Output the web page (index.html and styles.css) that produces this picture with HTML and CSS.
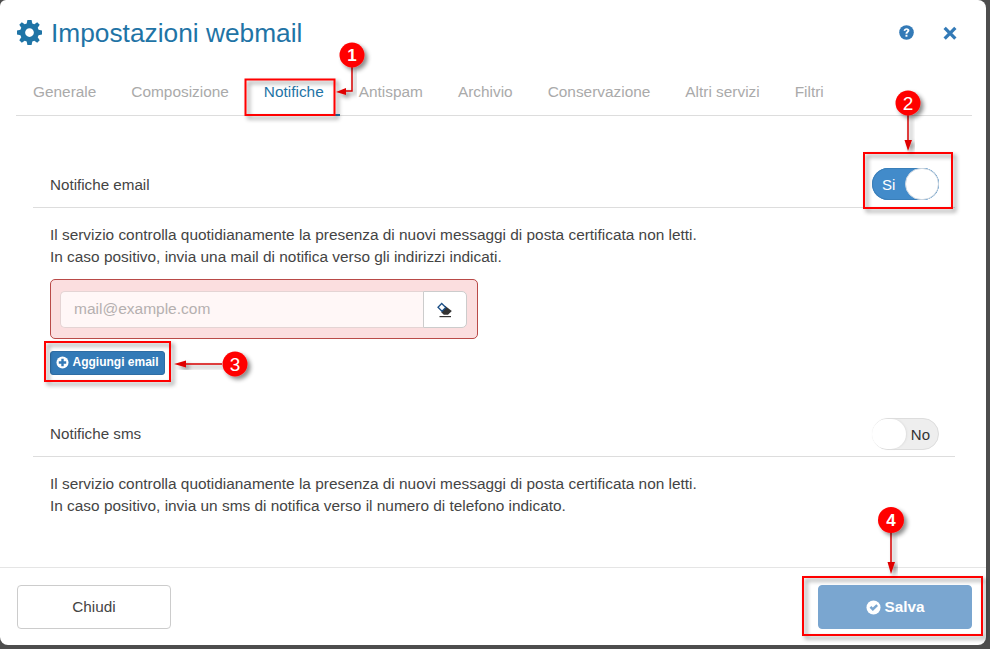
FILE: index.html
```html
<!DOCTYPE html>
<html lang="it">
<head>
<meta charset="utf-8">
<title>Impostazioni webmail</title>
<link rel="stylesheet" href="styles.css">
</head>
<body>
<div class="modal">
  <header class="head">
    <h1 class="title">
      <svg class="gear" viewBox="0 0 24 24"><path fill-rule="evenodd" d="M10 0h4l.7 3.3 1.900.8L19.400 2.200l2.400 2.400-1.900 2.800.8 1.900L24 10v4l-3.300.7-.8 1.900 1.900 2.800-2.400 2.400-2.800-1.900-1.900.8L14 24h-4l-.7-3.300-1.900-.8-2.800 1.900-2.400-2.400 1.900-2.800-.8-1.900L0 14v-4l3.300-.7.8-1.900-1.900-2.800 2.400-2.400 2.800 1.900 1.900-.8zM12 7.800a4.200 4.200 0 1 0 0 8.400 4.200 4.200 0 0 0 0-8.400z"/></svg>
      <span>Impostazioni webmail</span>
    </h1>
    <div class="head-icons">
      <svg class="ico-help" viewBox="0 0 16 16"><circle cx="8" cy="8" r="7.800" fill="#337ab7"/><path d="M5 6.300c0-1.800 1.300-2.900 3.100-2.900s3 1 3 2.400c0 2-2.100 1.900-2.100 3.500H6.900c0-2.400 2-2.300 2-3.400 0-.5-.4-.8-.9-.8-.6 0-1 .4-1.100 1.100z" fill="#fff"/><rect x="6.900" y="10.400" width="2.100" height="2.100" fill="#fff"/></svg>
      <svg class="ico-close" viewBox="0 0 14 14"><path d="M2.800.7 7 4.900 11.200.7 13.500 3 9.300 7.200l4.200 4.200-2.300 2.300L7 9.500l-4.200 4.200-2.300-2.300L4.700 7.200.5 3z" fill="#337ab7"/></svg>
    </div>
  </header>

  <nav class="tabs">
    <a class="tab">Generale</a>
    <a class="tab">Composizione</a>
    <a class="tab active">Notifiche</a>
    <a class="tab">Antispam</a>
    <a class="tab">Archivio</a>
    <a class="tab">Conservazione</a>
    <a class="tab">Altri servizi</a>
    <a class="tab">Filtri</a>
  </nav>

  <main class="body">
    <section class="section">
      <div class="row-head">
        <span>Notifiche email</span>
        <span class="switch on"><span class="switch-label">Si</span><span class="knob"></span></span>
      </div>
      <p class="desc">Il servizio controlla quotidianamente la presenza di nuovi messaggi di posta certificata non letti.<br>In caso positivo, invia una mail di notifica verso gli indirizzi indicati.</p>
      <div class="alert-box">
        <div class="input-group">
          <input class="input" type="text" placeholder="mail@example.com">
          <button class="eraser" type="button">
            <svg viewBox="0 0 16 16" width="16" height="16"><path d="M8 3.700 14.800 9 11 12.800H6.800L4.200 10.200z" fill="#333"/><path d="M4.700 1.500 1 5.300 5 9.300 8.800 5.500z" fill="#fff" stroke="#1c4f86" stroke-width="1.300"/><rect x="2.500" y="14" width="11.500" height="1.200" fill="#333"/></svg>
          </button>
        </div>
      </div>
      <button class="add-btn" type="button">
        <svg viewBox="0 0 14 14" width="13" height="13"><circle cx="7" cy="7" r="6.500" fill="#fff"/><path d="M5.700 3h2.600v2.700H11v2.600H8.300V11H5.700V8.300H3V5.700h2.700z" fill="#337ab7"/></svg>
        <span>Aggiungi email</span>
      </button>
    </section>

    <section class="section second">
      <div class="row-head">
        <span>Notifiche sms</span>
        <span class="switch off"><span class="knob"></span><span class="switch-label">No</span></span>
      </div>
      <p class="desc">Il servizio controlla quotidianamente la presenza di nuovi messaggi di posta certificata non letti.<br>In caso positivo, invia un sms di notifica verso il numero di telefono indicato.</p>
    </section>
  </main>

  <footer class="foot">
    <button class="btn-close" type="button">Chiudi</button>
    <button class="btn-save" type="button">
      <svg viewBox="0 0 16 16" width="15" height="15"><circle cx="8" cy="8" r="7.500" fill="#fff"/><path d="M3.800 8.200 5.700 6.300 7.300 7.900 11 4.400 12.800 6.300 7.300 11.700z" fill="#7aa6d0"/></svg>
      <span>Salva</span>
    </button>
  </footer>
</div>

<svg class="marks" width="990" height="649" viewBox="0 0 990 649">
  <defs>
    <filter id="sh" x="-20%" y="-20%" width="150%" height="150%"><feDropShadow dx="3" dy="3" stdDeviation="2" flood-color="#000" flood-opacity=".45"/></filter>
  </defs>
  <g filter="url(#sh)">
    <path class="mark-box" d="M245.500 79.500H334.500V115H245.500z"/>
  </g>
  <g filter="url(#sh)">
    <path class="mark-box" d="M864 153H952V208H864z"/>
  </g>
  <g filter="url(#sh)">
    <path class="mark-box" d="M45 342H170V381H45z"/>
  </g>
  <g filter="url(#sh)">
    <path class="mark-box" d="M803 577H982V635H803z"/>
  </g>
  <g filter="url(#sh)">
    <path class="mark-line" d="M352 67V91H345"/>
    <path class="mark-head" d="M336 92 346 88V95z"/>
  </g>
  <g filter="url(#sh)">
    <path class="mark-line" d="M908 115 908 142"/>
    <path class="mark-head" d="M908 151 904.500 140H912z"/>
  </g>
  <g filter="url(#sh)">
    <path class="mark-line" d="M222 364H184"/>
    <path class="mark-head" d="M174 364 186 360.500V367.500z"/>
  </g>
  <g filter="url(#sh)">
    <path class="mark-line" d="M891 532 891 564"/>
    <path class="mark-head" d="M891 574 887.500 562H895z"/>
  </g>
  <g filter="url(#sh)"><circle class="mark-dot" cx="352" cy="55" r="12.500"/></g>
  <g filter="url(#sh)"><circle class="mark-dot" cx="908" cy="103" r="12.500"/></g>
  <g filter="url(#sh)"><circle class="mark-dot" cx="235" cy="364" r="12.500"/></g>
  <g filter="url(#sh)"><circle class="mark-dot" cx="891" cy="520" r="13"/></g>
  <g class="mark-num">
    <text x="352" y="61">1</text>
    <text class="thin" x="908" y="110">2</text>
    <text class="thin" x="235" y="371">3</text>
    <text x="891" y="526">4</text>
  </g>
</svg>
</body>
</html>
```

FILE: styles.css
```css
* { box-sizing: border-box; }
html, body { margin: 0; height: 100%; }
body {
  background: #4d4d4d;
  font-family: "Liberation Sans", Arial, sans-serif;
  font-size: 15.200px;
  color: #444;
  overflow: hidden;
  width: 990px;
  height: 649px;
}
.modal {
  width: 986px;
  height: 645px;
  background: #fff;
  border-radius: 6px 8px 8px 8px;
  display: flex;
  flex-direction: column;
}
.head {
  height: 69px;
  padding: 16px 29px 0 17px;
  display: flex;
  justify-content: space-between;
  align-items: flex-start;
}
.title {
  margin: 0;
  font-weight: 400;
  font-size: 26.300px;
  line-height: 34px;
  color: #1f74a6;
  display: flex;
  align-items: center;
  gap: 9px;
}
.gear { width: 25px; height: 25px; fill: #1f74a6; margin-top: -2px; }
.head-icons { display: flex; align-items: center; gap: 29px; padding-top: 9px; }
.ico-help { width: 15px; height: 15px; }
.ico-close { width: 14px; height: 14px; }
.tabs {
  margin: 0 14px 0 16px;
  height: 47px;
  border-bottom: 1px solid #ddd;
  display: flex;
  padding-left: 1px;
}
.tab {
  padding: 14px 16px 0;
  margin-right: 3px;
  font-size: 15.400px;
  line-height: 18px;
  color: #aaa;
  height: 47px;
}
.tab.active { color: #1f74a6; border-bottom: 2px solid #1f74a6; }
.body { flex: 1; padding: 0 31px 0 33px; }
.section { padding-top: 55px; }
.section.second { padding-top: 45px; }
.row-head {
  height: 37px;
  padding: 0 16px 10px 17px;
  display: flex;
  justify-content: space-between;
  align-items: center;
  border-bottom: 1px solid #ddd;
}
.switch {
  width: 67px;
  height: 32px;
  border-radius: 16px;
  display: flex;
  align-items: center;
  justify-content: space-between;
  font-size: 15px;
}
.switch.on { background: #428bca; color: #fff; padding-left: 10px; box-shadow: inset 0 0 0 1px #3a7fb9; }
.switch.off { background: #eee; color: #333; padding-right: 8px; border: 1px solid #ddd; margin-top: 2px; }
.knob {
  width: 34px;
  height: 32px;
  border-radius: 17px;
  background: #fff;
  border: 1px solid #ccd6e0;
}
.switch.off .knob { border: 0; margin-left: -1px; height: 30px; box-shadow: 1px 0 2px #ddd; }
.desc {
  margin: 16px 0 0 17px;
  line-height: 22px;
  font-size: 15.400px;
  white-space: nowrap;
}
.alert-box {
  margin: 11px 0 0 17px;
  width: 428px;
  height: 60px;
  background: #fbdedf;
  border: 1px solid #b94a48;
  border-radius: 5px;
  padding: 11px 10px 0 9px;
}
.input-group { display: flex; height: 37px; }
.input {
  flex: 1;
  min-width: 0;
  border: 1px solid #e4d4d4;
  border-right: 0;
  border-radius: 5px 0 0 5px;
  background: #fff7f7;
  padding: 0 13px 2px;
  font: 15.500px "Liberation Sans", Arial, sans-serif;
}
.input::placeholder { color: #b5b0b0; opacity: 1; }
.eraser {
  width: 44px;
  border: 1px solid #ccc;
  border-radius: 0 5px 5px 0;
  background: #fff;
  padding: 0;
  display: flex;
  align-items: center;
  justify-content: center;
}
.add-btn {
  margin: 12px 0 0 17px;
  width: 115px;
  height: 24px;
  background: #337ab7;
  border: 1px solid #2e6da4;
  border-radius: 3px;
  color: #fff;
  font: 700 12px "Liberation Sans", Arial, sans-serif;
  display: flex;
  align-items: center;
  justify-content: center;
  gap: 3px;
  padding: 0 0 2px;
}
.foot {
  height: 78px;
  border-top: 1px solid #e5e5e5;
  padding: 17px 14px 0 17px;
  display: flex;
  justify-content: space-between;
  align-items: flex-start;
}
.btn-close, .btn-save {
  width: 154px;
  height: 44px;
  border-radius: 4px;
  font: 15.300px "Liberation Sans", Arial, sans-serif;
}
.btn-close { background: #fff; border: 1px solid #ccc; color: #444; }
.btn-save {
  background: #7aa6d0;
  border: 1px solid #7aa6d0;
  color: #fff;
  font-weight: 700;
  display: flex;
  align-items: center;
  justify-content: center;
  gap: 4px;
}
.marks { position: absolute; left: 0; top: 0; pointer-events: none; }
.mark-box { fill: none; stroke: #f00; stroke-width: 2; }
.mark-line { fill: none; stroke: #d40000; stroke-width: 1.500; }
.mark-head { fill: #e00000; }
.mark-dot { fill: #f00; }
.mark-num text {
  fill: #fff;
  font: 700 17px "Liberation Sans", Arial, sans-serif;
  text-anchor: middle;
}
.mark-num text.thin { font-weight: 400; font-size: 19px; }
```
